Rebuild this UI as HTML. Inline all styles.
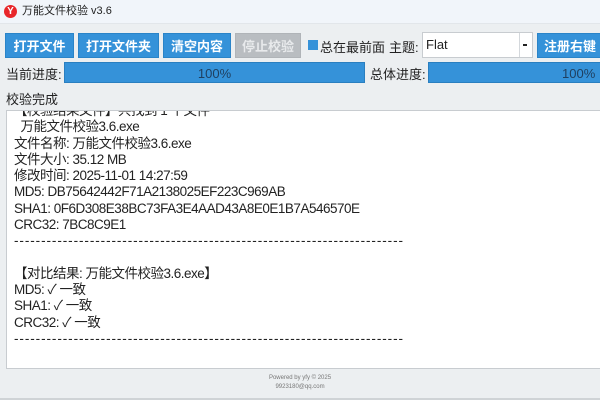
<!DOCTYPE html>
<html><head><meta charset="utf-8"><style>
*{margin:0;padding:0;box-sizing:border-box}
body{width:600px;height:400px;overflow:hidden;background:#eceff1;font-family:"Liberation Sans","Noto Sans CJK SC",sans-serif;position:relative;color:#222}
.a{position:absolute;white-space:nowrap}
.title{left:0;top:0;width:600px;height:24px;background:#f1f5fa;border-bottom:1px solid #e2e6ea}
.btn{position:absolute;top:33px;height:25px;background:#3592d9;color:#fff;font-size:13px;font-weight:bold;text-align:center;line-height:25px;border:1px solid #2a84c8}
.bar{position:absolute;top:62px;height:21px;background:#3592d9;color:#1f3f5f;font-size:13px;text-align:center;line-height:21px;border:1px solid #2a7fc0}
.lbl{font-size:13px;color:#222}
.ta{left:6px;top:110px;width:600px;height:259px;background:#fff;border:1px solid #c8ccd0}
.ln{position:absolute;left:14px;font-size:13.5px;line-height:16px;color:#222;white-space:nowrap;letter-spacing:-0.5px}
.d{letter-spacing:0.92px}
</style></head><body>
<div class="a title"></div>
<div class="a" style="left:4px;top:5px;width:13px;height:13px;border-radius:50%;background:#e8262a;color:#fff;font-size:10px;font-weight:bold;text-align:center;line-height:13px">Y</div>
<div class="a" style="left:22px;top:4px;font-size:11px;line-height:15px">万能文件校验 v3.6</div>

<div class="btn" style="left:5px;width:69px">打开文件</div>
<div class="btn" style="left:78px;width:81px">打开文件夹</div>
<div class="btn" style="left:163px;width:68px">清空内容</div>
<div class="btn" style="left:235px;width:66px;background:#b9bdc1;border-color:#b0b4b8;color:#e8eaec">停止校验</div>
<div class="a" style="left:308px;top:40px;width:10px;height:10px;background:#3592d9"></div>
<div class="a lbl" style="left:320px;top:37px">总在最前面</div>
<div class="a lbl" style="left:389px;top:37px">主题:</div>
<div class="a" style="left:422px;top:32px;width:111px;height:26px;background:#fff;border:1px solid #c8ccd0"></div>
<div class="a" style="left:519px;top:33px;width:1px;height:24px;background:#d4d8dc"></div>
<div class="a" style="left:426px;top:37px;font-size:13px">Flat</div>
<div class="a" style="left:523px;top:44px;width:4px;height:2px;background:#222"></div>
<div class="btn" style="left:537px;width:70px;text-align:left;padding-left:6px">注册右键菜单</div>

<div class="a lbl" style="left:6px;top:64px">当前进度:</div>
<div class="bar" style="left:64px;width:301px">100%</div>
<div class="a lbl" style="left:370px;top:64px">总体进度:</div>
<div class="bar" style="left:428px;width:180px;text-align:left;padding-left:133px">100%</div>

<div class="a lbl" style="left:6px;top:89px">校验完成</div>

<div class="a ta"></div>
<div class="a" style="left:7px;top:111px;width:592px;height:257px;overflow:hidden">
<div class="ln" style="top:-8px;left:7px">【校验结果文件】共找到 1 个文件</div>
<div class="ln" style="top:8px;left:7px">&nbsp; 万能文件校验3.6.exe</div>
<div class="ln" style="top:25px;left:7px">文件名称: 万能文件校验3.6.exe</div>
<div class="ln" style="top:41px;left:7px">文件大小: 35.12 MB</div>
<div class="ln" style="top:57px;left:7px">修改时间: 2025-11-01 14:27:59</div>
<div class="ln" style="top:73px;left:7px">MD5: DB75642442F71A2138025EF223C969AB</div>
<div class="ln" style="top:90px;left:7px">SHA1: 0F6D308E38BC73FA3E4AAD43A8E0E1B7A546570E</div>
<div class="ln" style="top:106px;left:7px">CRC32: 7BC8C9E1</div>
<div class="ln d" style="top:122px;left:7px">------------------------------------------------------------------------</div>
<div class="ln" style="top:155px;left:7px">【对比结果: 万能文件校验3.6.exe】</div>
<div class="ln" style="top:171px;left:7px">MD5: ✓ 一致</div>
<div class="ln" style="top:187px;left:7px">SHA1: ✓ 一致</div>
<div class="ln" style="top:204px;left:7px">CRC32: ✓ 一致</div>
<div class="ln d" style="top:220px;left:7px">------------------------------------------------------------------------</div>
</div>
<div class="a" style="left:0;top:374px;width:600px;text-align:center;font-size:6px;line-height:9px;color:#777">Powered by yfy © 2025<br>9923180@qq.com</div>
<div class="a" style="left:0;top:398px;width:600px;height:2px;background:#cfd3d6"></div>
</body></html>
